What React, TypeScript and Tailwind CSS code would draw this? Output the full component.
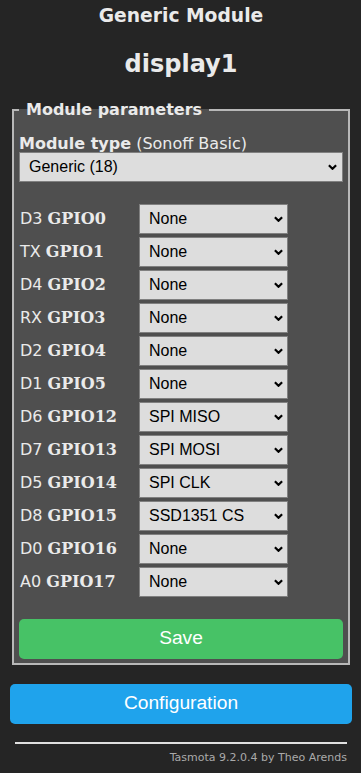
import React from "react";

const pins: { pre: string; gpio: string; value: string }[] = [
  { pre: "D3", gpio: "GPIO0", value: "None" },
  { pre: "TX", gpio: "GPIO1", value: "None" },
  { pre: "D4", gpio: "GPIO2", value: "None" },
  { pre: "RX", gpio: "GPIO3", value: "None" },
  { pre: "D2", gpio: "GPIO4", value: "None" },
  { pre: "D1", gpio: "GPIO5", value: "None" },
  { pre: "D6", gpio: "GPIO12", value: "SPI MISO" },
  { pre: "D7", gpio: "GPIO13", value: "SPI MOSI" },
  { pre: "D5", gpio: "GPIO14", value: "SPI CLK" },
  { pre: "D8", gpio: "GPIO15", value: "SSD1351 CS" },
  { pre: "D0", gpio: "GPIO16", value: "None" },
  { pre: "A0", gpio: "GPIO17", value: "None" },
];

const options = ["None", "SPI MISO", "SPI MOSI", "SPI CLK", "SSD1351 CS"];

function Chevron({ className }: { className: string }) {
  return (
    <svg
      viewBox="0 0 10 6"
      className={`pointer-events-none absolute top-1/2 -translate-y-1/2 w-[9px] h-[6px] ${className}`}
      fill="none"
      stroke="#000"
      strokeWidth="2.4"
    >
      <path d="M1 1l4 4 4-4" />
    </svg>
  );
}

function Select({ value, items, wide }: { value: string; items: string[]; wide?: boolean }) {
  return (
    <div className={`relative h-[30px] ${wide ? "w-full" : "w-[149px]"}`}>
      <select
        defaultValue={value}
        className="appearance-none w-full h-full bg-[#dddddd] text-black border border-[#808080] pl-[9px] pr-6 text-[16px] font-['Liberation_Sans',Arial,sans-serif] outline-none"
      >
        {items.map((o) => (
          <option key={o}>{o}</option>
        ))}
      </select>
      <Chevron className={wide ? "right-[6px]" : "right-[5px]"} />
    </div>
  );
}

export default function App() {
  return (
    <div className="min-h-screen bg-[#252525] text-[#eaeaea] pt-[5px] pl-[10px] pr-[9px] font-['DejaVu_Sans',Verdana,sans-serif]">
      <h3 className="text-center font-bold text-[18.72px] leading-[22px]">Generic Module</h3>
      <h2 className="mt-[23px] text-center font-bold text-[24px] leading-[28px]">display1</h2>

      <fieldset className="mt-[22px] mx-[2px] border-2 border-[#b8b8b8] bg-[#4f4f4f] px-[5px] pb-[4px]">
        <legend className="px-[7px] font-bold text-[16px] leading-[20px]">Module parameters</legend>

        <div className="mt-[15.5px] h-[16px] leading-[16px] text-[16px] whitespace-nowrap">
          <b>Module type</b> (Sonoff Basic)
        </div>
        <Select value="Generic (18)" items={["Generic (18)", "Sonoff Basic (1)"]} wide />

        <div className="mt-[22px] flex flex-col gap-[3px]">
          {pins.map((p) => (
            <div key={p.gpio} className="flex items-center h-[30px]">
              <div className="w-[120px] pl-[1px] text-[16px] whitespace-nowrap">
                {p.pre}{" "}
                <b className="font-['DejaVu_Serif',serif] font-bold">{p.gpio}</b>
              </div>
              <Select value={p.value} items={options} />
            </div>
          ))}
        </div>

        <button className="mt-[22px] w-full h-[40px] rounded-[5px] bg-[#47c266] text-white text-[19.2px] font-['Liberation_Sans',Arial,sans-serif]">
          Save
        </button>
      </fieldset>

      <button className="mt-[19px] w-full h-[40px] rounded-[5px] bg-[#1fa3ec] text-white text-[19.2px] font-['Liberation_Sans',Arial,sans-serif]">
        Configuration
      </button>

      <div className="text-right text-[11px]">
        <hr className="mt-[18px] mx-[5px] border-0 border-t-2 border-[#e0e0e0]" />
        <a className="inline-block mt-[7px] mr-[5px] leading-[13px] text-[#aaaaaa]">
          Tasmota 9.2.0.4 by Theo Arends
        </a>
      </div>
    </div>
  );
}
